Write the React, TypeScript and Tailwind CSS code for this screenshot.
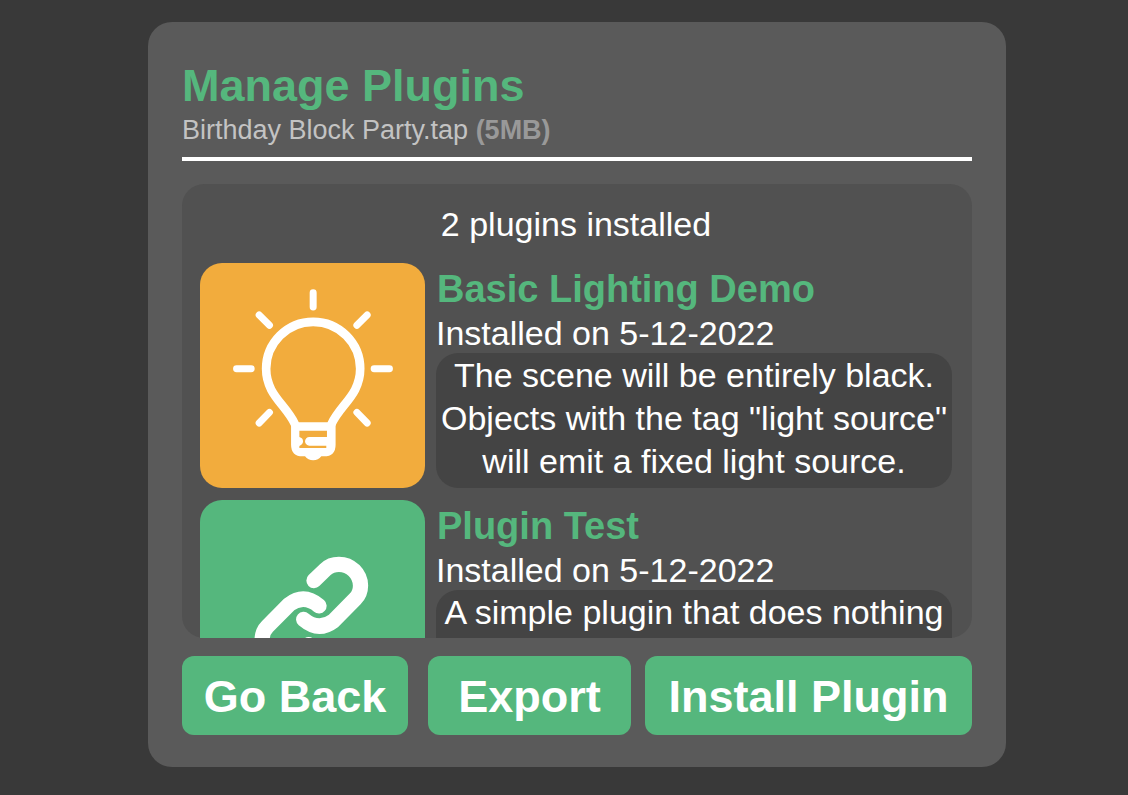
import type { ReactNode } from "react";

function BulbIcon() {
  return (
    <svg viewBox="28 24 677 676" className="block size-full" fill="none" stroke="#fff" strokeLinecap="round" aria-hidden="true">
      <g strokeWidth="21">
        <path d="M368.500 113V156M206 180L237 211M531 180L500 211M138 342H182M552 342H598M237 473L206 505M500 473L531 505" />
      </g>
      <path
        strokeWidth="26"
        d="M313 507C287 450 227 420 227 342A141.500 141.500 0 0 1 510 342C510 420 450 450 424 507"
      />
      <path
        fill="#fff"
        stroke="none"
        fillRule="evenodd"
        d="M302 503H436V570Q436 605 401 605H393Q384 617 368.500 617Q353 617 344 605H337Q302 605 302 570ZM327 528V547Q338 550 338 560Q338 570 327 574V580H408V573H357A13 13 0 0 1 357 547H410V528Z"
      />
    </svg>
  );
}

function ChainIcon() {
  const half =
    "M371 270L405 237Q421 221 446 221A65 65 0 0 1 511 285Q511 309 495 325L430 391Q385 425 340 387";
  return (
    <svg viewBox="28 28 677 676" className="block size-full" fill="none" stroke="#fff" strokeWidth="46" strokeLinecap="round" aria-hidden="true">
      <path d={half} />
      <path d={half} transform="rotate(180 363 366.500)" />
    </svg>
  );
}

interface PluginProps {
  name: string;
  installed: string;
  description: string;
  tile: string;
  icon: ReactNode;
}

function Plugin({ name, installed, description, tile, icon }: PluginProps) {
  return (
    <li className="flex gap-[11px]">
      <div className={`size-[225px] shrink-0 overflow-hidden rounded-[22px] ${tile}`}>{icon}</div>
      <div className="flex min-w-0 flex-1 flex-col">
        <h2 className="pt-px pl-px text-[38px] leading-[50px] font-bold text-[#55b77d]">{name}</h2>
        <p className="text-[34px] leading-[39px]">{installed}</p>
        <p className="flex-1 rounded-[22px] bg-[#444444] px-1 pt-px text-center text-[34px] leading-[43px]">
          {description}
        </p>
      </div>
    </li>
  );
}

const buttonStyle =
  "h-[79px] rounded-xl bg-[#55b77d] pt-0.5 text-center text-[45px] leading-[50px] font-bold whitespace-nowrap text-white";

export default function App() {
  return (
    <main className="min-h-screen bg-[#393939] pt-[22px] pb-7 pl-[26px] font-['Liberation_Sans',Arial,sans-serif] text-white">
      <section className="mx-auto w-full max-w-[858px] rounded-3xl bg-[#5a5a5a] px-[34px] pt-[39px] pb-8">
        <header className="border-b-4 border-white pb-2">
          <h1 className="text-[45px] leading-[50px] font-bold text-[#55b77d]">Manage Plugins</h1>
          <p className="text-[27px] leading-[38px] text-[#c3c3c3]">
            Birthday Block Party.tap <strong className="font-bold text-[#999999]">(5MB)</strong>
          </p>
        </header>

        <div className="mt-[23px] rounded-[22px] bg-[#515151]">
          <div className="h-[454px] overflow-y-auto pt-[19px] pr-5 pl-[18px] [scrollbar-width:none]">
            <p className="mb-[17px] text-center text-[34px] leading-[43px]">2 plugins installed</p>
            <ul className="flex flex-col gap-3">
              <Plugin
                name="Basic Lighting Demo"
                installed="Installed on 5-12-2022"
                description={'The scene will be entirely black. Objects with the tag "light source" will emit a fixed light source.'}
                tile="bg-[#f2ac3d]"
                icon={<BulbIcon />}
              />
              <Plugin
                name="Plugin Test"
                installed="Installed on 5-12-2022"
                description="A simple plugin that does nothing"
                tile="bg-[#55b77d]"
                icon={<ChainIcon />}
              />
            </ul>
          </div>
        </div>

        <div className="mt-[18px] flex">
          <button type="button" className={`flex-[226] ${buttonStyle}`}>Go Back</button>
          <button type="button" className={`ml-5 flex-[203] ${buttonStyle}`}>Export</button>
          <button type="button" className={`ml-3.5 flex-[327] ${buttonStyle}`}>Install Plugin</button>
        </div>
      </section>
    </main>
  );
}
